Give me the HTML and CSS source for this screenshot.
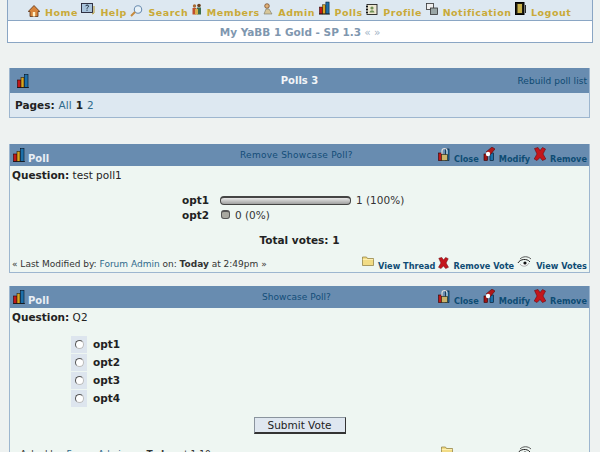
FILE: index.html
```html
<!DOCTYPE html>
<html lang="en">
<head>
<meta charset="utf-8">
<title>Polls</title>
<link rel="stylesheet" href="styles.css">
</head>
<body>
<svg class="defs" width="0" height="0" aria-hidden="true">
  <symbol id="i-polls" viewBox="0 0 12 14">
    <rect x="0.5" y="6" width="3.5" height="7.5" fill="#c01818" stroke="#300" stroke-width=".6"/>
    <rect x="4" y="3.5" width="3" height="10" fill="#d9a520" stroke="#320" stroke-width=".6"/>
    <rect x="7.5" y="0.5" width="3.5" height="13" fill="#1d6fa8" stroke="#012" stroke-width=".6"/>
    <path d="M0 13.6h12" stroke="#111" stroke-width=".8"/>
  </symbol>
  <symbol id="i-close" viewBox="0 0 12 14">
    <rect x="0.5" y="6" width="3.5" height="7.5" fill="#c01818" stroke="#300" stroke-width=".6"/>
    <rect x="7.5" y="2" width="3.5" height="11.5" fill="#1d6fa8" stroke="#012" stroke-width=".6"/>
    <path d="M4 8V4a2.5 2.5 0 0 1 5 0v4" fill="none" stroke="#ddd" stroke-width="1.2"/>
    <rect x="3.5" y="7.5" width="6" height="6" fill="#c9b46a" stroke="#221" stroke-width=".6"/>
  </symbol>
  <symbol id="i-modify" viewBox="0 0 12 14">
    <rect x="1" y="7" width="3.5" height="6.5" fill="#a01515" stroke="#300" stroke-width=".6"/>
    <rect x="7" y="6" width="3.5" height="7.5" fill="#1d6fa8" stroke="#012" stroke-width=".6"/>
    <path d="M3 5 9 0l3 2-5 6z" fill="#b01818" stroke="#400" stroke-width=".5"/>
    <circle cx="5" cy="7" r="2.2" fill="#fff"/>
  </symbol>
  <symbol id="i-x" viewBox="0 0 12 14">
    <path d="M.5 1.500 4 .5 6 3.500 8.500 .5 11.500 2 9 7l2.800 5L8.500 13.500 6 10.500 3 13.500 .2 12 3 7z" fill="#c4161c" stroke="#6a0a10" stroke-width=".6"/>
  </symbol>
  <symbol id="i-folder" viewBox="0 0 12 10">
    <path d="M.5 9.500V1h4l1 1.500h6v7z" fill="#f2dc85" stroke="#8a7a3a" stroke-width=".7"/>
    <path d="M.8 3.500h10.400" stroke="#fff3bd" stroke-width=".8"/>
  </symbol>
  <symbol id="i-eye" viewBox="0 0 15 12">
    <path d="M1 7C3 3 10 2 13 6" fill="none" stroke="#222" stroke-width="1"/>
    <path d="M3 3C6 0 11 0 14 3" fill="none" stroke="#333" stroke-width=".8"/>
    <path d="M3 8c2 3 7 3 9-1" fill="#fff" stroke="#777" stroke-width=".6"/>
    <circle cx="8" cy="7" r="1.600" fill="#111"/>
  </symbol>
</svg>

<header class="top">
  <nav class="nav">
    <a class="nav-link"><svg class="nav-ico" width="12" height="12" viewBox="0 0 12 12"><path d="M6 .5 .2 6.500H2V11.500H10V6.500H11.800z" fill="#d8843a" stroke="#5c3416" stroke-width=".8"/><rect x="4.800" y="7" width="2.400" height="4.500" fill="#fff2c8"/></svg>Home</a>
    <a class="nav-link"><svg class="nav-ico up" width="14" height="12" viewBox="0 0 14 12"><rect x=".5" y=".5" width="11" height="9" fill="#a9c4dc" stroke="#223" stroke-width=".9"/><path d="M4.500 3.200c.5-1.500 3-1.500 3 0 0 1.200-1.500 1.200-1.500 2.500M6 6.700v1" fill="none" stroke="#123" stroke-width="1"/><path d="M13 3v7l-2 1" fill="none" stroke="#b3972f" stroke-width="1"/></svg>Help</a>
    <a class="nav-link"><svg class="nav-ico" width="13" height="12" viewBox="0 0 13 12"><circle cx="8" cy="4.500" r="3.700" fill="#e8f2f8" stroke="#6b8db0" stroke-width="1.100"/><path d="M5 7 1 11" stroke="#c68a3c" stroke-width="2"/></svg>Search</a>
    <a class="nav-link"><svg class="nav-ico up" width="10" height="12" viewBox="0 0 10 12"><circle cx="2.500" cy="3" r="1.700" fill="#a86a34"/><circle cx="7" cy="2.500" r="1.800" fill="#6b4020"/><rect x=".5" y="5" width="4" height="6.500" fill="#c04f2c"/><rect x="5" y="4.500" width="4" height="7" fill="#3d6b4c"/><rect x="3" y="6" width="3" height="5.500" fill="#d8b04c"/></svg>Members</a>
    <a class="nav-link"><svg class="nav-ico up" width="10" height="12" viewBox="0 0 10 12"><circle cx="4" cy="3" r="2.300" fill="#e0b078" stroke="#6b4020" stroke-width=".7"/><path d="M1 11 3 6h3l3 5z" fill="#d8c79a" stroke="#776" stroke-width=".6"/></svg>Admin</a>
    <a class="nav-link"><svg class="nav-ico up" width="11" height="14"><use href="#i-polls"/></svg>Polls</a>
    <a class="nav-link"><svg class="nav-ico up" width="12" height="11" viewBox="0 0 12 11"><rect x="1" y=".5" width="10" height="10" fill="#ece7d2" stroke="#222" stroke-width=".9"/><circle cx="6" cy="4" r="1.600" fill="#6f8f55"/><path d="M3.500 8.500c.5-3 4.500-3 5 0z" fill="#6f8f55"/><path d="M0 2.500h2M0 5.500h2M0 8.500h2" stroke="#111"/></svg>Profile</a>
    <a class="nav-link"><svg class="nav-ico up" width="12" height="12" viewBox="0 0 12 12"><rect x=".5" y=".5" width="7" height="6" fill="#eee" stroke="#333" stroke-width=".8"/><rect x="4.500" y="5" width="7" height="6.500" fill="#9aa6a6" stroke="#333" stroke-width=".8"/></svg>Notification</a>
    <a class="nav-link"><svg class="nav-ico up" width="11" height="13" viewBox="0 0 11 13"><rect x=".5" y=".5" width="8.500" height="12" fill="#1c1a10" stroke="#000"/><rect x="2.500" y="2" width="4.500" height="9" fill="#c9b24a"/><path d="M10.500 3v8" stroke="#2a2a2a"/></svg>Logout</a>
  </nav>
  <div class="board">My YaBB 1 Gold - SP 1.3 <span class="arrows">« »</span></div>
</header>

<main class="main">
  <section class="box list">
    <div class="bar list-bar">
      <svg class="bar-ico" width="12" height="14"><use href="#i-polls"/></svg>
      <strong class="list-title">Polls 3</strong>
      <a class="rebuild">Rebuild poll list</a>
    </div>
    <div class="pages"><b>Pages:</b> <a class="lnk">All</a> <b>1</b> <a class="lnk">2</a></div>
  </section>

  <section class="box poll poll-one">
    <div class="bar poll-bar">
      <div class="poll-name"><svg class="bar-ico" width="12" height="14"><use href="#i-polls"/></svg><strong>Poll</strong></div>
      <a class="showcase">Remove Showcase Poll?</a>
      <div class="actions">
        <a class="act"><svg width="12" height="14"><use href="#i-close"/></svg>Close</a>
        <a class="act"><svg width="12" height="14"><use href="#i-modify"/></svg>Modify</a>
        <a class="act"><svg width="12" height="14"><use href="#i-x"/></svg>Remove</a>
      </div>
    </div>
    <div class="body">
      <p class="question"><b>Question:</b> test poll1</p>
      <div class="results">
        <b>opt1</b><div class="result"><span class="meter meter-full"></span>1 (100%)</div>
        <b>opt2</b><div class="result"><span class="meter meter-zero"></span>0 (0%)</div>
      </div>
      <p class="total">Total votes: 1</p>
      <div class="foot">
        <span class="modified">« Last Modified by: <a class="lnk">Forum Admin</a> on: <b>Today</b> at 2:49pm »</span>
        <div class="foot-acts">
          <a class="act"><svg class="ico-folder" width="12" height="10"><use href="#i-folder"/></svg>View Thread</a>
          <a class="act"><svg class="ico-x" width="11" height="12"><use href="#i-x"/></svg>Remove Vote</a>
          <a class="act"><svg width="15" height="12"><use href="#i-eye"/></svg>View Votes</a>
        </div>
      </div>
    </div>
  </section>

  <section class="box poll poll-two">
    <div class="bar poll-bar">
      <div class="poll-name"><svg class="bar-ico" width="12" height="14"><use href="#i-polls"/></svg><strong>Poll</strong></div>
      <a class="showcase showcase-two">Showcase Poll?</a>
      <div class="actions">
        <a class="act"><svg width="12" height="14"><use href="#i-close"/></svg>Close</a>
        <a class="act"><svg width="12" height="14"><use href="#i-modify"/></svg>Modify</a>
        <a class="act"><svg width="12" height="14"><use href="#i-x"/></svg>Remove</a>
      </div>
    </div>
    <div class="body">
      <p class="question"><b>Question:</b> Q2</p>
      <div class="options">
        <label class="opt"><span class="radio-cell"><span class="radio"></span></span><b>opt1</b></label>
        <label class="opt"><span class="radio-cell"><span class="radio"></span></span><b>opt2</b></label>
        <label class="opt"><span class="radio-cell"><span class="radio"></span></span><b>opt3</b></label>
        <label class="opt"><span class="radio-cell"><span class="radio"></span></span><b>opt4</b></label>
      </div>
      <div class="submit-row"><button class="submit" type="button">Submit Vote</button></div>
      <div class="foot">
        <span class="modified">« Asked by: <a class="lnk">Forum Admin</a> on: <b>Today</b> at 1:10pm »</span>
        <div class="foot-acts">
          <a class="act"><svg class="ico-folder" width="12" height="10"><use href="#i-folder"/></svg>View Thread</a>
          <a class="act"><svg width="15" height="12"><use href="#i-eye"/></svg>View Votes</a>
        </div>
      </div>
    </div>
  </section>
</main>
</body>
</html>
```
FILE: styles.css
```css
* { box-sizing: border-box; }
html, body { height: 452px; overflow: hidden; }
body {
  margin: 0;
  background: #eef2f1;
  color: #222;
  font-family: "DejaVu Sans", Verdana, sans-serif;
  font-size: 10px;
}
.defs { position: absolute; }
svg { display: block; flex: none; }

.top {
  margin: 0 7px;
  width: 586px;
  height: 43px;
  background: #fff;
  border: 1px solid #8aa6c4;
  border-top: 0;
}
.nav {
  height: 21px;
  background: #dde8f1;
  border-bottom: 1px solid #8aa6c4;
  display: flex;
  align-items: flex-end;
  gap: 3.6px;
  padding: 0 0 1px 20px;
}
.nav-link {
  display: flex;
  align-items: flex-end;
  gap: 5px;
  color: #c9aa38;
  font-weight: 700;
  font-size: 9.5px;
  letter-spacing: .5px;
  line-height: 12px;
}
.nav-ico { margin-bottom: 2px; }
.nav-ico.up { margin-bottom: 4px; }
.board {
  height: 21px;
  display: flex;
  align-items: center;
  justify-content: center;
  gap: 3px;
  color: #7f97af;
  font-weight: 700;
  font-size: 10.500px;
}
.arrows { font-weight: 400; color: #9fb3c6; }

.main { margin: 0 9px; width: 581px; }
.box { border: 1px solid #9db6cf; border-top: 0; }
.list { margin-top: 25px; }
.poll { background: #eef6f2; }
.poll-one { margin-top: 26px; height: 129px; }
.poll-two { margin-top: 13px; }

.bar {
  background: #688cb0;
  display: flex;
  align-items: center;
  padding: 0 2px 0 3px;
  color: #fff;
}
.list-bar { height: 25px; padding: 0 2px 0 7px; position: relative; }
.list-title {
  position: absolute;
  left: 0;
  right: 0;
  text-align: center;
  color: #f2f5f8;
  font-size: 10px;
}
.rebuild {
  margin-left: auto;
  color: #0e4a72;
  font-size: 9px;
  letter-spacing: .05px;
}
.pages {
  height: 24px;
  background: #dde8f1;
  padding: 0 5px;
  display: flex;
  align-items: center;
  gap: 4px;
  font-size: 10.500px;
}
.lnk { color: #2f6a8c; font-weight: 400; }

.poll-bar { height: 22px; position: relative; }
.poll-name {
  display: flex;
  align-items: flex-end;
  gap: 3px;
  color: #e9eff5;
  font-size: 10px;
}
.poll-name strong { line-height: 11px; margin-bottom: -1px; }
.poll-bar .bar-ico { margin-bottom: 1px; }
.showcase {
  position: absolute;
  top: 6px;
  left: 230px;
  color: #134d78;
  font-size: 9px;
  letter-spacing: .25px;
}
.showcase-two { left: 252px; letter-spacing: .05px; }
.actions {
  margin-left: auto;
  display: flex;
  gap: 4px;
  align-items: flex-end;
}
.act {
  display: flex;
  align-items: flex-end;
  gap: 4px;
  color: #0e4c74;
  font-weight: 700;
  font-size: 8.200px;
  line-height: 10px;
}
.actions .act svg { margin-bottom: 3px; }

.body { padding: 0 2px; }
.question { margin: 0; height: 21px; line-height: 19px; font-size: 10.500px; }
.results {
  display: grid;
  grid-template-columns: 38px auto;
  grid-auto-rows: 14.500px;
  margin: 6px 0 0 170px;
  align-items: center;
  font-size: 10.500px;
}
.result { display: flex; align-items: center; gap: 5px; color: #333; }
.meter {
  display: block;
  height: 9px;
  border: 1px solid #444;
  border-top-width: 2px;
  border-radius: 4px;
  background: linear-gradient(#e8e8e8, #a0a0a0);
}
.meter-full { width: 131px; }
.meter-zero { width: 9px; border-radius: 3px; border-color: #555; background: #a8a8a0; margin-left: 1px; }
.total {
  margin: 12px 0 0;
  height: 22px;
  text-align: center;
  font-weight: 700;
  font-size: 10.500px;
}
.foot {
  display: flex;
  justify-content: space-between;
  align-items: flex-end;
}
.modified { font-size: 9px; line-height: 11px; color: #333; margin-bottom: 2px; }
.foot-acts { display: flex; gap: 3px; align-items: flex-end; margin-bottom: 1px; }
.foot-acts .act svg { margin-bottom: 3px; }
.foot-acts .act .ico-folder { margin-bottom: 5px; }
.foot-acts .act .ico-x { margin-bottom: 2px; }

.options {
  margin: 6px 0 0 59px;
  display: flex;
  flex-direction: column;
}
.opt {
  height: 18px;
  display: flex;
  align-items: center;
  gap: 6px;
  font-size: 10.500px;
}
.radio-cell {
  width: 16px;
  height: 17px;
  background: #dde5ee;
  display: flex;
  align-items: center;
  justify-content: center;
}
.radio {
  width: 9px;
  height: 9px;
  border-radius: 50%;
  background: #fff;
  border: 1px solid #555;
  border-right-color: #bbb;
  border-bottom-color: #bbb;
}
.submit-row { display: flex; justify-content: center; padding: 10px 0 0; }
.submit {
  width: 92px;
  height: 17px;
  padding: 0;
  background: #dfe7f0;
  border: 1px solid #8a949e;
  border-right-color: #333;
  border-bottom: 2px solid #333;
  color: #222;
  font-family: "DejaVu Sans", Verdana, sans-serif;
  font-size: 10.500px;
}
.poll-two .foot { margin-top: 12px; }
```
